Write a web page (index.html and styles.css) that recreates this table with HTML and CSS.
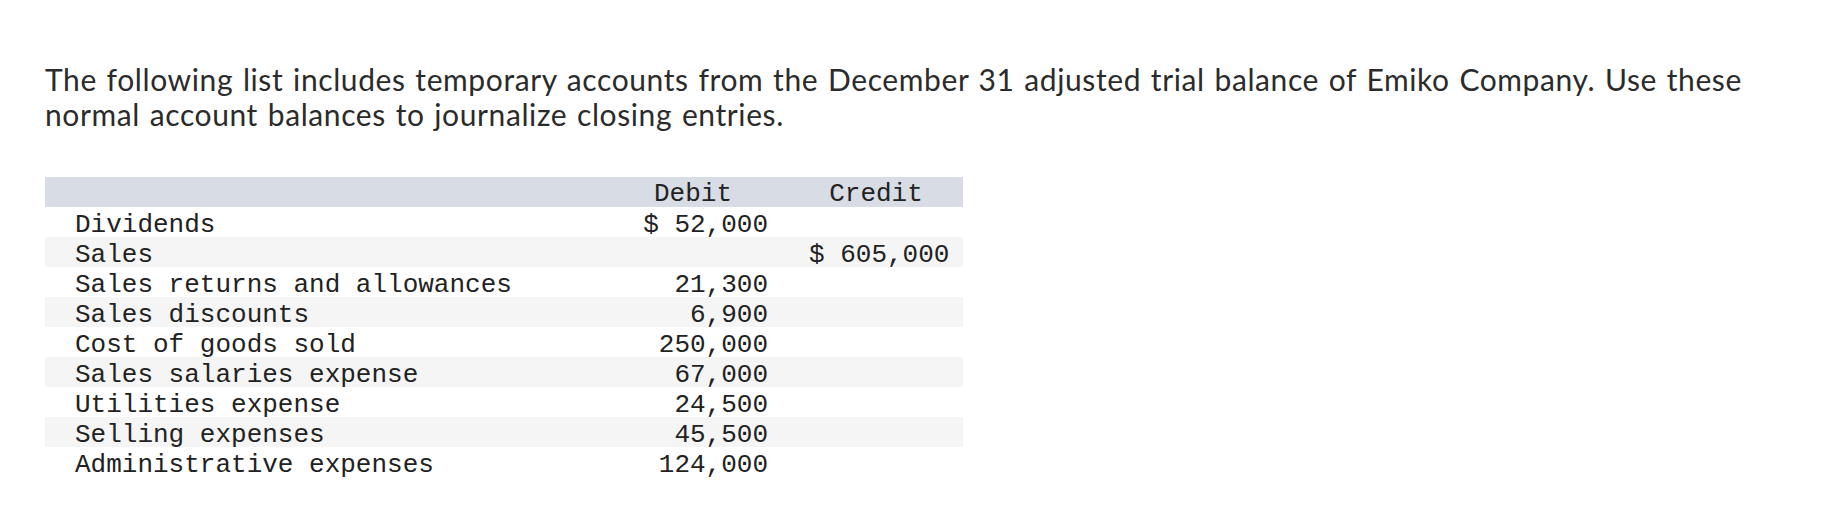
FILE: index.html
```html
<!DOCTYPE html>
<html lang="en">
<head>
<meta charset="utf-8">
<title>Closing entries</title>
<link rel="stylesheet" href="styles.css">
</head>
<body>
<main class="page">
  <p class="intro">The following list includes temporary accounts from the December 31 adjusted trial balance of Emiko Company. Use these normal account balances to journalize closing entries.</p>
  <table class="ledger">
    <thead>
      <tr>
        <th class="label"></th>
        <th class="debit">Debit</th>
        <th class="credit">Credit</th>
      </tr>
    </thead>
    <tbody>
      <tr><td class="label">Dividends</td><td class="debit">$ 52,000</td><td class="credit"></td></tr>
      <tr><td class="label">Sales</td><td class="debit"></td><td class="credit">$ 605,000</td></tr>
      <tr><td class="label">Sales returns and allowances</td><td class="debit">21,300</td><td class="credit"></td></tr>
      <tr><td class="label">Sales discounts</td><td class="debit">6,900</td><td class="credit"></td></tr>
      <tr><td class="label">Cost of goods sold</td><td class="debit">250,000</td><td class="credit"></td></tr>
      <tr><td class="label">Sales salaries expense</td><td class="debit">67,000</td><td class="credit"></td></tr>
      <tr><td class="label">Utilities expense</td><td class="debit">24,500</td><td class="credit"></td></tr>
      <tr><td class="label">Selling expenses</td><td class="debit">45,500</td><td class="credit"></td></tr>
      <tr><td class="label">Administrative expenses</td><td class="debit">124,000</td><td class="credit"></td></tr>
    </tbody>
  </table>
</main>
</body>
</html>
```
FILE: styles.css
```css
html, body {
  margin: 0;
  padding: 0;
  background: #ffffff;
}

.page {
  padding: 62px 40px 0 45px;
}

.intro {
  margin: 0 0 45px 0;
  font-family: "Lato", "Liberation Sans", sans-serif;
  font-size: 30px;
  line-height: 35px;
  letter-spacing: 0.6px;
  word-spacing: 1.5px;
  color: #2b2b2b;
  max-width: 1730px;
}

.ledger {
  width: 918px;
  border-collapse: collapse;
  border-spacing: 0;
  font-family: "Liberation Mono", monospace;
  font-size: 26px;
  color: #222222;
  table-layout: fixed;
}

.ledger th,
.ledger td {
  height: 30px;
  box-sizing: border-box;
  padding: 6px 0 0 0;
  line-height: 24px;
  white-space: pre;
  font-weight: normal;
  vertical-align: top;
}

.ledger thead tr {
  background: #d8dce5;
}

.ledger thead th {
  padding-top: 4px;
  line-height: 26px;
  text-align: center;
}

.ledger tbody tr:nth-child(even) {
  background: #f5f5f5;
}

.ledger .label {
  width: 573px;
  padding-left: 30px;
  text-align: left;
}

.ledger .debit {
  width: 150px;
  text-align: right;
}

.ledger thead .debit {
  text-align: center;
}

.ledger .credit {
  width: 195px;
  padding-left: 41px;
  padding-right: 20px;
  text-align: right;
}

.ledger thead .credit {
  text-align: center;
}
```
